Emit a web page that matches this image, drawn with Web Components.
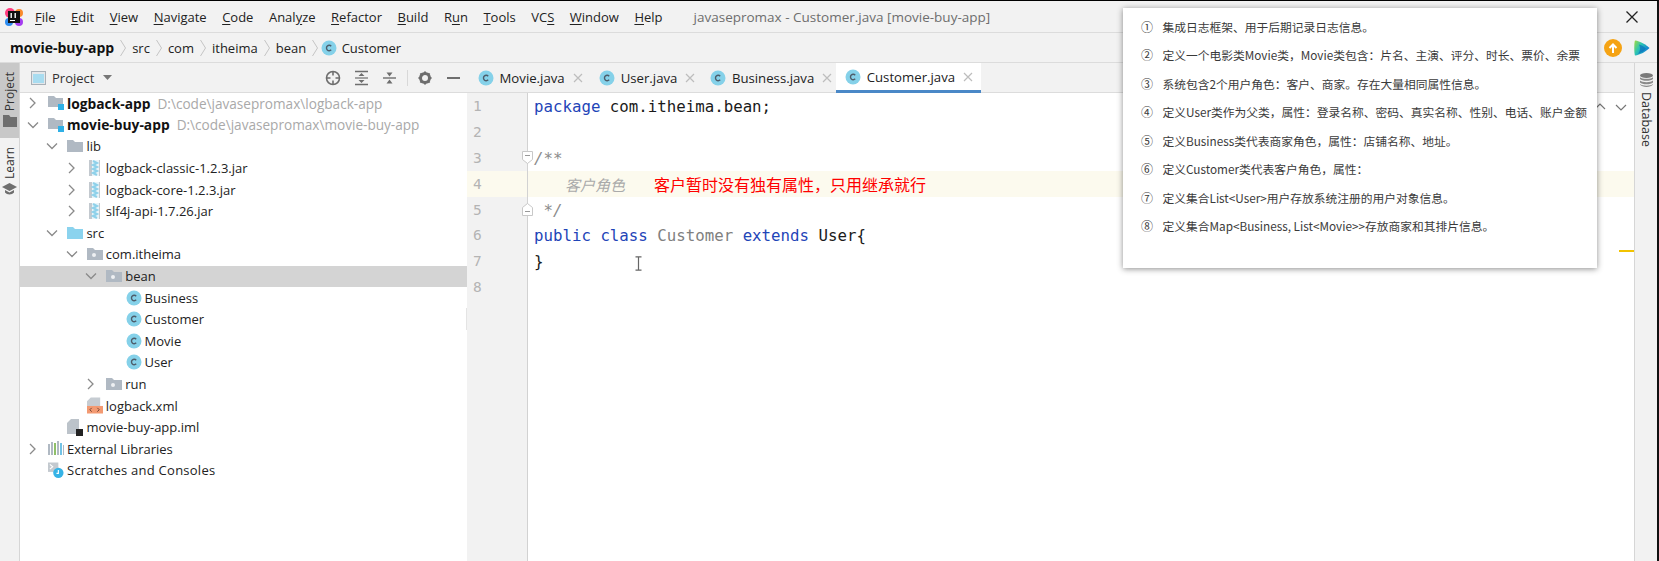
<!DOCTYPE html>
<html lang="zh">
<head>
<meta charset="utf-8">
<title>javasepromax - Customer.java [movie-buy-app]</title>
<style>
    html, body { margin: 0; padding: 0; background: #fff; overflow: hidden; }
    body { font-family: "Open Sans", "Noto Sans CJK SC", sans-serif; color: #222; }
    u { text-underline-offset: 2px; }
</style>
</head>
<body>

<ide-app>
    <ide-menubar>
        <menu-item><u>F</u>ile</menu-item>
        <menu-item><u>E</u>dit</menu-item>
        <menu-item><u>V</u>iew</menu-item>
        <menu-item><u>N</u>avigate</menu-item>
        <menu-item><u>C</u>ode</menu-item>
        <menu-item>Anal<u>y</u>ze</menu-item>
        <menu-item><u>R</u>efactor</menu-item>
        <menu-item><u>B</u>uild</menu-item>
        <menu-item>R<u>u</u>n</menu-item>
        <menu-item><u>T</u>ools</menu-item>
        <menu-item>VC<u>S</u></menu-item>
        <menu-item><u>W</u>indow</menu-item>
        <menu-item><u>H</u>elp</menu-item>
        <span slot="title">javasepromax - Customer.java [movie-buy-app]</span>
    </ide-menubar>

    <ide-breadcrumb>
        <crumb-item bold>movie-buy-app</crumb-item>
        <crumb-item>src</crumb-item>
        <crumb-item>com</crumb-item>
        <crumb-item>itheima</crumb-item>
        <crumb-item>bean</crumb-item>
        <crumb-item icon="class" last>Customer</crumb-item>
    </ide-breadcrumb>

    <ide-main>
        <tool-strip>
            <strip-button active icon="folder">Project</strip-button>
            <strip-button icon="cap">Learn</strip-button>
        </tool-strip>

        <project-panel>
            <tree-row chevron="closed" icon="module" depth="0"><b>logback-app</b><small>D:\code\javasepromax\logback-app</small></tree-row>
            <tree-row chevron="open" icon="module" depth="0"><b>movie-buy-app</b><small>D:\code\javasepromax\movie-buy-app</small></tree-row>
            <tree-row chevron="open" icon="folder" depth="1">lib</tree-row>
            <tree-row chevron="closed" icon="jar" depth="2">logback-classic-1.2.3.jar</tree-row>
            <tree-row chevron="closed" icon="jar" depth="2">logback-core-1.2.3.jar</tree-row>
            <tree-row chevron="closed" icon="jar" depth="2">slf4j-api-1.7.26.jar</tree-row>
            <tree-row chevron="open" icon="src" depth="1">src</tree-row>
            <tree-row chevron="open" icon="package" depth="2">com.itheima</tree-row>
            <tree-row chevron="open" icon="package" depth="3" selected>bean</tree-row>
            <tree-row icon="class" depth="4">Business</tree-row>
            <tree-row icon="class" depth="4">Customer</tree-row>
            <tree-row icon="class" depth="4">Movie</tree-row>
            <tree-row icon="class" depth="4">User</tree-row>
            <tree-row chevron="closed" icon="package" depth="3">run</tree-row>
            <tree-row icon="xml" depth="2">logback.xml</tree-row>
            <tree-row icon="iml" depth="1">movie-buy-app.iml</tree-row>
            <tree-row chevron="closed" icon="libs" depth="0">External Libraries</tree-row>
            <tree-row icon="scratch" depth="0" wide>Scratches and Consoles</tree-row>
        </project-panel>

        <editor-pane>
            <editor-tab slot="tabs" pad="10.5" end="5.5">Movie.java</editor-tab>
            <editor-tab slot="tabs" pad="10.5" end="4.5">User.java</editor-tab>
            <editor-tab slot="tabs" pad="10" end="3.5">Business.java</editor-tab>
            <editor-tab slot="tabs" pad="9" end="8" active>Customer.java</editor-tab>

            <code-line n="1"><i class="kw">package</i> com.itheima.bean;</code-line>
            <code-line n="2"></code-line>
            <code-line n="3" fold="start"><i class="doc">/**</i></code-line>
            <code-line n="4" active><span class="gray">客户角色</span><span class="red">客户暂时没有独有属性，只用继承就行</span></code-line>
            <code-line n="5" fold="end"><i class="doc"> */</i></code-line>
            <code-line n="6"><i class="kw">public class</i> <span class="cls">Customer</span> <i class="kw">extends</i> User{</code-line>
            <code-line n="7">}</code-line>
            <code-line n="8"></code-line>
        </editor-pane>

        <right-strip>Database</right-strip>
    </ide-main>

    <note-popup>
        <note-item n="①">集成日志框架、用于后期记录日志信息。</note-item>
        <note-item n="②">定义一个电影类Movie类，Movie类包含：片名、主演、评分、时长、票价、余票</note-item>
        <note-item n="③">系统包含2个用户角色：客户、商家。存在大量相同属性信息。</note-item>
        <note-item n="④">定义User类作为父类，属性：登录名称、密码、真实名称、性别、电话、账户金额</note-item>
        <note-item n="⑤">定义Business类代表商家角色，属性：店铺名称、地址。</note-item>
        <note-item n="⑥">定义Customer类代表客户角色，属性：</note-item>
        <note-item n="⑦">定义集合List&lt;User&gt;用户存放系统注册的用户对象信息。</note-item>
        <note-item n="⑧">定义集合Map&lt;Business, List&lt;Movie&gt;&gt;存放商家和其排片信息。</note-item>
    </note-popup>
</ide-app>

<script>
const UI_FONT = '"Open Sans", "Noto Sans CJK SC", sans-serif';

// all tree, tab and strip icons live here
const ICONS = {
    folder: `<svg width="16" height="14" viewBox="0 0 16 14"><path d="M0 1h6l2 2h8v10H0z" fill="#b0b9c3"/></svg>`,
    src: `<svg width="16" height="14" viewBox="0 0 16 14"><path d="M0 1h6l2 2h8v10H0z" fill="#8bd3ee"/></svg>`,
    package: `<svg width="16" height="14" viewBox="0 0 16 14"><path d="M0 1h6l2 2h8v10H0z" fill="#b0b9c3"/><circle cx="7" cy="8" r="2" fill="#eef0f2"/></svg>`,
    module: `<svg width="16" height="16" viewBox="0 0 16 16"><path d="M0 1h6l2 2h7v9H0z" fill="#b0b9c3"/><rect x="10" y="9" width="6" height="6" fill="#2fb0e6"/></svg>`,
    jar: `<svg width="12" height="16" viewBox="0 0 12 16"><rect x="0" y="0" width="11" height="16" fill="#c3c9cf"/><rect x="3" y="0" width="7" height="16" fill="#e8f4f9"/><path d="M4 1l4 2-4 2 4 2-4 2 4 2-4 2 4 2" fill="none" stroke="#8ed1ea" stroke-width="2"/></svg>`,
    class: `<svg width="16" height="16" viewBox="0 0 16 16"><circle cx="8" cy="8" r="7.5" fill="#85d1e9"/><path d="M10.2 6.2a2.7 2.7 0 1 0 0 3.6" fill="none" stroke="#4d5d6b" stroke-width="1.4"/></svg>`,
    xml: `<svg width="17" height="17" viewBox="0 0 17 17"><path d="M4 0h10v10H0V4z" fill="#c6ccd2"/><rect x="0" y="9" width="17" height="8" fill="#f39a72"/><path d="M5 11l-2 2 2 2M11 11l2 2-2 2" fill="none" stroke="#6b4030" stroke-width="1"/></svg>`,
    iml: `<svg width="16" height="17" viewBox="0 0 16 17"><path d="M4 0h8v15H0V4z" fill="#bcc3ca"/><rect x="9" y="10" width="7" height="7" fill="#222"/></svg>`,
    libs: `<svg width="16" height="15" viewBox="0 0 16 15"><rect x="0" y="3" width="2" height="11" fill="#b0b9c3"/><rect x="3" y="1" width="2" height="13" fill="#b0b9c3"/><rect x="6" y="2" width="2" height="12" fill="#8fc069"/><rect x="9" y="0" width="2" height="14" fill="#b0b9c3"/><rect x="12" y="2" width="2" height="12" fill="#72c3e6"/><rect x="15" y="4" width="1" height="10" fill="#b0b9c3"/></svg>`,
    scratch: `<svg width="17" height="17" viewBox="0 0 17 17"><rect x="0" y="0" width="11" height="10" fill="#c3c9cf"/><path d="M2 2l3 2.5L2 7" fill="none" stroke="#fff" stroke-width="1.2"/><circle cx="11" cy="11" r="5.5" fill="#36b3e6"/><path d="M11 8v3.5H9" fill="none" stroke="#fff" stroke-width="1.2"/></svg>`,
    cap: `<svg width="15" height="12" viewBox="0 0 15 12"><path d="M7.5 0L15 4 7.5 8 0 4z" fill="#6e6e6e"/><path d="M3 7v2.5C5 12 10 12 12 9.5V7L7.5 9.5z" fill="#6e6e6e"/></svg>`,
    stripFolder: `<svg width="14" height="12" viewBox="0 0 14 12"><path d="M0 0h6l1.5 2H14v10H0z" fill="#6e6e6e"/></svg>`
};

class IdeApp extends HTMLElement {
    constructor() {
        super();
        this.attachShadow({ mode: 'open' });
        this.shadowRoot.innerHTML = `
            <style>
                :host {
                    display: flex;
                    flex-direction: column;
                    position: relative;
                    box-sizing: border-box;
                    width: 1659px;
                    height: 561px;
                    overflow: hidden;
                    border-top: 1px solid #000;
                    border-right: 2px solid #111;
                    background: #f2f2f2;
                    font-family: ${UI_FONT};
                }
                .marker {
                    position: absolute;
                    right: -2px;
                    top: 209px;
                    width: 2px;
                    height: 42px;
                    background: #1e90f0;
                }
            </style>
            <slot></slot>
            <div class="marker"></div>
        `;
    }
}

class IdeMenubar extends HTMLElement {
    constructor() {
        super();
        this.attachShadow({ mode: 'open' });
        this.shadowRoot.innerHTML = `
            <style>
                :host {
                    display: flex;
                    align-items: center;
                    box-sizing: border-box;
                    height: 32px;
                    flex: none;
                    padding-left: 5px;
                    background: #f2f2f2;
                    border-bottom: 1px solid #dcdcdc;
                }
                .logo { flex: none; width: 18px; height: 18px; margin-right: 12px; }
                .items { display: flex; gap: 15.5px; font-size: 13px; color: #222; }
                .title { margin-left: 31px; font-size: 13.5px; color: #6e6e6e; white-space: nowrap; }
                .close { margin-left: auto; margin-right: 19px; width: 12px; height: 12px; }
            </style>
            <svg class="logo" viewBox="0 0 18 18">
                <circle cx="5" cy="5" r="5" fill="#ff3d7f"/>
                <circle cx="14" cy="5" r="4" fill="#f98a2c"/>
                <circle cx="4" cy="14" r="4" fill="#2d8cf0"/>
                <circle cx="14" cy="14" r="4" fill="#a53cf0"/>
                <rect x="3" y="3" width="12" height="12" fill="#111"/>
                <rect x="5" y="12" width="5" height="1" fill="#fff"/>
                <rect x="5.5" y="5" width="1.4" height="5" fill="#fff"/>
                <rect x="9.5" y="5" width="1.4" height="5" fill="#fff"/>
            </svg>
            <div class="items"><slot></slot></div>
            <div class="title"><slot name="title"></slot></div>
            <svg class="close" viewBox="0 0 12 12"><path d="M.5.5l11 11M11.5.5l-11 11" stroke="#222" stroke-width="1.3"/></svg>
        `;
    }
}

class MenuItem extends HTMLElement {
    constructor() {
        super();
        this.attachShadow({ mode: 'open' });
        this.shadowRoot.innerHTML = `<style>:host { display: block; white-space: nowrap; }</style><slot></slot>`;
    }
}

class IdeBreadcrumb extends HTMLElement {
    constructor() {
        super();
        this.attachShadow({ mode: 'open' });
        this.shadowRoot.innerHTML = `
            <style>
                :host {
                    display: flex;
                    align-items: center;
                    box-sizing: border-box;
                    height: 30px;
                    flex: none;
                    padding-left: 10px;
                    background: #f2f2f2;
                    border-bottom: 1px solid #dcdcdc;
                    font-size: 13px;
                }
                .right { margin-left: auto; margin-right: 7px; display: flex; align-items: center; gap: 11px; }
            </style>
            <slot></slot>
            <div class="right">
                <svg width="18" height="18" viewBox="0 0 18 18">
                    <circle cx="9" cy="9" r="9" fill="#f5a314"/>
                    <path d="M9 14V6M5.5 9L9 5.5 12.5 9" fill="none" stroke="#fff" stroke-width="2"/>
                </svg>
                <svg width="17" height="18" viewBox="0 0 17 18">
                    <defs>
                        <linearGradient id="play" x1="0" y1="0" x2="1" y2="0.6">
                            <stop offset="0" stop-color="#a5dc3c"/>
                            <stop offset="0.45" stop-color="#2cc4b4"/>
                            <stop offset="1" stop-color="#0d78d8"/>
                        </linearGradient>
                    </defs>
                    <path d="M2 1.5C1 3 1 15 2 16.5C7 16 13 12.5 16.5 9C13 5.5 7 2 2 1.5z" fill="url(#play)"/>
                    <path d="M6 5.5C9 6.5 11.5 8 13 9.5C11 12 8.5 13.5 5 15C7.5 12 7.5 8.5 6 5.5z" fill="#0a6fbe" opacity="0.7"/>
                </svg>
            </div>
        `;
    }
}

class CrumbItem extends HTMLElement {
    constructor() {
        super();
        this.attachShadow({ mode: 'open' });
    }

    connectedCallback() {
        const icon = this.getAttribute('icon');
        const last = this.hasAttribute('last');
        this.shadowRoot.innerHTML = `
            <style>
                :host { display: flex; align-items: center; white-space: nowrap; color: #222; }
                :host([bold]) { font-weight: 700; color: #111; font-size: 14px; }
                :host([last]) { margin-left: -3.5px; }
                .icon { display: flex; margin-right: 5px; }
                .sep { margin: 0 6px 0 6px; }
            </style>
            ${icon ? `<span class="icon">${ICONS[icon]}</span>` : ''}
            <slot></slot>
            ${last ? '' : `<svg class="sep" width="6" height="18" viewBox="0 0 6 18"><path d="M.5 1l5 8-5 8" fill="none" stroke="#c4c4c4"/></svg>`}
        `;
    }
}

class IdeMain extends HTMLElement {
    constructor() {
        super();
        this.attachShadow({ mode: 'open' });
        this.shadowRoot.innerHTML = `
            <style>
                :host { display: flex; flex: 1; min-height: 0; }
            </style>
            <slot></slot>
        `;
    }
}

class ToolStrip extends HTMLElement {
    constructor() {
        super();
        this.attachShadow({ mode: 'open' });
        this.shadowRoot.innerHTML = `
            <style>
                :host {
                    display: flex;
                    flex-direction: column;
                    box-sizing: border-box;
                    width: 20px;
                    flex: none;
                    background: #f2f2f2;
                    border-right: 1px solid #d6d6d6;
                }
            </style>
            <slot></slot>
        `;
    }
}

class StripButton extends HTMLElement {
    constructor() {
        super();
        this.attachShadow({ mode: 'open' });
    }

    connectedCallback() {
        const icon = this.getAttribute('icon') === 'cap' ? ICONS.cap : ICONS.stripFolder;
        this.shadowRoot.innerHTML = `
            <style>
                :host {
                    display: flex;
                    flex-direction: column;
                    align-items: center;
                    height: 82px;
                    padding-top: 9px;
                    box-sizing: border-box;
                    gap: 4px;
                    font-size: 12px;
                    color: #333;
                }
                :host([active]) { height: 75px; background: #c8c8c8; }
                .label { writing-mode: vertical-rl; transform: rotate(180deg); }
            </style>
            <span class="label"><slot></slot></span>
            ${icon}
        `;
    }
}

class ProjectPanel extends HTMLElement {
    constructor() {
        super();
        this.attachShadow({ mode: 'open' });
        this.shadowRoot.innerHTML = `
            <style>
                :host {
                    display: flex;
                    flex-direction: column;
                    position: relative;
                    box-sizing: border-box;
                    width: 447px;
                    flex: none;
                    background: #fff;
                }
                header {
                    display: flex;
                    align-items: center;
                    box-sizing: border-box;
                    height: 30px;
                    flex: none;
                    padding-left: 11px;
                    background: #f2f2f2;
                    border-bottom: 1px solid #dcdcdc;
                    font-size: 13px;
                    color: #333;
                }
                .title-icon { margin-right: 6px; }
                .caret { margin-left: 9px; }
                .tools { margin-left: auto; margin-right: 7.5px; }
                .thumb {
                    position: absolute;
                    right: 0;
                    top: 245px;
                    width: 1px;
                    height: 22px;
                    background: #e4e4e4;
                }
            </style>
            <header>
                <svg class="title-icon" width="15" height="14" viewBox="0 0 15 14">
                    <rect x=".5" y=".5" width="14" height="13" fill="#e4e7ea" stroke="#a9b0b7"/>
                    <rect x="2" y="3" width="11" height="9" fill="#a8dcf0"/>
                </svg>
                <span>Project</span>
                <svg class="caret" width="9" height="5" viewBox="0 0 9 5"><path d="M0 0h9L4.5 5z" fill="#777"/></svg>
                <svg class="tools" width="140" height="18" viewBox="0 0 140 18">
                    <g fill="none" stroke="#6e6e6e" stroke-width="1.6">
                        <circle cx="13" cy="9" r="6.5"/>
                        <path d="M13 2.5v4M13 11.5v4M6.5 9h4M15.5 9h4"/>
                        <path d="M35 2.5h13M35 15.5h13"/>
                    </g>
                    <path d="M35 9h13" stroke="#6e6e6e" stroke-width="1.2"/>
                    <path d="M41.5 4l3 3h-6zM41.5 14l3-3h-6z" fill="#6e6e6e"/>
                    <path d="M63 9h13" stroke="#6e6e6e" stroke-width="1.4"/>
                    <path d="M69.5 7.5l3-4h-6zM69.5 10.5l3 4h-6z" fill="#6e6e6e"/>
                    <path d="M87.5 1v16" stroke="#d8d8d8"/>
                    <circle cx="105" cy="9" r="4.5" fill="none" stroke="#6e6e6e" stroke-width="3"/>
                    <path d="M105 2.5v13M98.5 9h13M100.4 4.4l9.2 9.2M109.6 4.4l-9.2 9.2" stroke="#6e6e6e" stroke-width="2" stroke-dasharray="2 9"/>
                    <path d="M127 9h13" stroke="#6e6e6e" stroke-width="2"/>
                </svg>
            </header>
            <slot></slot>
            <div class="thumb"></div>
        `;
    }
}

class TreeRow extends HTMLElement {
    constructor() {
        super();
        this.attachShadow({ mode: 'open' });
    }

    connectedCallback() {
        const depth = Number(this.getAttribute('depth') || 0);
        const chevron = this.getAttribute('chevron');
        let chevronSvg = '';
        if (chevron === 'closed') {
            chevronSvg = `<path d="M4 2l5 5-5 5" fill="none" stroke="#8a8a8a" stroke-width="1.3"/>`;
        } else if (chevron === 'open') {
            chevronSvg = `<path d="M2 4.5l5 5 5-5" fill="none" stroke="#8a8a8a" stroke-width="1.3"/>`;
        }
        this.shadowRoot.innerHTML = `
            <style>
                :host {
                    display: flex;
                    align-items: center;
                    box-sizing: border-box;
                    height: 21.6px;
                    flex: none;
                    padding-left: ${6 + depth * 19.4}px;
                    padding-bottom: 1px;
                    font-size: 13px;
                    color: #222;
                    white-space: nowrap;
                }
                :host([selected]) { background: #d4d4d4; }
                :host([wide]) { letter-spacing: 0.25px; }
                .chevron { width: 14px; height: 14px; flex: none; margin-right: 8px; }
                .icon { width: 16px; display: flex; justify-content: center; flex: none; margin-right: 3px; }
                ::slotted(small) { font-size: 13.6px; color: #a9a9a9; margin-left: 7px; }
                ::slotted(b) { color: #111; font-size: 13.8px; }
            </style>
            <svg class="chevron" viewBox="0 0 14 14">${chevronSvg}</svg>
            <span class="icon">${ICONS[this.getAttribute('icon')]}</span>
            <slot></slot>
        `;
    }
}

class EditorPane extends HTMLElement {
    constructor() {
        super();
        this.attachShadow({ mode: 'open' });
        this.shadowRoot.innerHTML = `
            <style>
                :host {
                    display: flex;
                    flex-direction: column;
                    position: relative;
                    flex: 1;
                    min-width: 0;
                }
                nav {
                    display: flex;
                    box-sizing: border-box;
                    height: 30px;
                    flex: none;
                    background: #f2f2f2;
                    border-bottom: 1px solid #dcdcdc;
                }
                .code {
                    flex: 1;
                    background: linear-gradient(90deg, #f2f2f2 60px, #d2d2d2 60px, #d2d2d2 61px, #fff 61px);
                }
                .arrows { position: absolute; left: 1125px; top: 38px; }
                .warn {
                    position: absolute;
                    right: 0;
                    top: 187px;
                    width: 15px;
                    height: 2px;
                    background: #f2c300;
                }
                .caret { position: absolute; left: 168px; top: 193px; }
            </style>
            <nav><slot name="tabs"></slot></nav>
            <div class="code"><slot></slot></div>
            <svg class="arrows" width="40" height="12" viewBox="0 0 40 12">
                <path d="M3 8l5-5 5 5M24 4l5 5 5-5" fill="none" stroke="#777" stroke-width="1.2"/>
            </svg>
            <div class="warn"></div>
            <svg class="caret" width="7" height="15" viewBox="0 0 7 15">
                <path d="M.5.8h6M.5 14.2h6M3.5.8v13.4" fill="none" stroke="#666" stroke-width="1.2"/>
            </svg>
        `;
    }
}

class EditorTab extends HTMLElement {
    constructor() {
        super();
        this.attachShadow({ mode: 'open' });
    }

    connectedCallback() {
        this.shadowRoot.innerHTML = `
            <style>
                :host {
                    display: flex;
                    align-items: center;
                    box-sizing: border-box;
                    height: 30px;
                    padding-left: ${this.getAttribute('pad')}px;
                    padding-right: ${this.getAttribute('end')}px;
                    font-size: 13.2px;
                    color: #222;
                    white-space: nowrap;
                }
                :host([active]) { background: #fff; border-bottom: 3px solid #4a88c7; }
                .icon { display: flex; margin-right: 6px; }
                .x { margin-left: 8px; }
            </style>
            <span class="icon">${ICONS.class}</span>
            <slot></slot>
            <svg class="x" width="10" height="10" viewBox="0 0 10 10"><path d="M1 1l8 8M9 1l-8 8" stroke="#bdbdbd" stroke-width="1.2"/></svg>
        `;
    }
}

class CodeLine extends HTMLElement {
    constructor() {
        super();
        this.attachShadow({ mode: 'open' });
    }

    connectedCallback() {
        const fold = this.getAttribute('fold');
        let foldMark = '';
        if (fold === 'start') {
            foldMark = `<svg class="fold" width="11" height="13" viewBox="0 0 11 13"><path d="M.5.5h10v8l-5 4-5-4z" fill="#fff" stroke="#c8c8c8"/><path d="M3 4.5h5" stroke="#999"/></svg>`;
        } else if (fold === 'end') {
            foldMark = `<svg class="fold" width="11" height="13" viewBox="0 0 11 13"><path d="M.5 12.5h10v-8l-5-4-5 4z" fill="#fff" stroke="#c8c8c8"/><path d="M3 8.5h5" stroke="#999"/></svg>`;
        }
        this.shadowRoot.innerHTML = `
            <style>
                :host {
                    display: flex;
                    position: relative;
                    height: 25.9px;
                    line-height: 27.5px;
                    font-family: "DejaVu Sans Mono", "Noto Sans CJK SC", monospace;
                    font-size: 15.75px;
                    color: #1a1a1a;
                    white-space: pre;
                }
                :host([active]) { background: #fcfaee; }
                .num { box-sizing: border-box; width: 60px; padding-left: 6px; color: #b4b4b4; font-size: 14.5px; flex: none; }
                .sep { width: 1px; background: #d2d2d2; flex: none; margin-right: 6px; }
                .text { display: block; }
                .fold { position: absolute; left: 55px; top: 6px; }
                ::slotted(i) { font-style: normal; }
                ::slotted(i.kw) { color: #1f45b8; }
                ::slotted(i.doc) { color: #8c8c8c; font-style: italic; }
                ::slotted(.cls) { color: #808080; }
                ::slotted(.gray) { margin-left: 31px; color: #aaa; font-style: italic; font-size: 15px; font-family: "Noto Sans CJK SC", sans-serif; }
                ::slotted(.red) { margin-left: 29px; color: #f00; font-size: 16px; font-family: "Noto Sans CJK SC", sans-serif; }
            </style>
            <span class="num">${this.getAttribute('n')}</span>
            <span class="sep"></span>
            <span class="text"><slot></slot></span>
            ${foldMark}
        `;
    }
}

class RightStrip extends HTMLElement {
    constructor() {
        super();
        this.attachShadow({ mode: 'open' });
        this.shadowRoot.innerHTML = `
            <style>
                :host {
                    display: flex;
                    flex-direction: column;
                    align-items: center;
                    box-sizing: border-box;
                    width: 23px;
                    flex: none;
                    padding-top: 10px;
                    gap: 5px;
                    background: #f2f2f2;
                    border-left: 1px solid #d6d6d6;
                    font-size: 12.5px;
                    color: #333;
                }
                .label { writing-mode: vertical-rl; }
            </style>
            <svg width="13" height="14" viewBox="0 0 13 14">
                <ellipse cx="6.5" cy="2.5" rx="6.5" ry="2.5" fill="#7a7a7a"/>
                <path d="M0 4.2c2 2.2 11 2.2 13 0V6c-2 2.4-11 2.4-13 0zM0 7.6c2 2.2 11 2.2 13 0v1.8c-2 2.4-11 2.4-13 0zM0 11c2 2.2 11 2.2 13 0v.5c-2 3.2-11 3.2-13 0z" fill="#8a8a8a"/>
            </svg>
            <span class="label"><slot></slot></span>
        `;
    }
}

class NotePopup extends HTMLElement {
    constructor() {
        super();
        this.attachShadow({ mode: 'open' });
        this.shadowRoot.innerHTML = `
            <style>
                :host {
                    display: flex;
                    flex-direction: column;
                    position: absolute;
                    left: 1123px;
                    top: 7px;
                    box-sizing: border-box;
                    width: 474px;
                    height: 260px;
                    padding-top: 4px;
                    background: #fff;
                    box-shadow: 0 1px 6px rgba(0, 0, 0, 0.45);
                }
            </style>
            <slot></slot>
        `;
    }
}

class NoteItem extends HTMLElement {
    constructor() {
        super();
        this.attachShadow({ mode: 'open' });
    }

    connectedCallback() {
        this.shadowRoot.innerHTML = `
            <style>
                :host {
                    display: flex;
                    align-items: center;
                    height: 28.5px;
                    flex: none;
                    padding-left: 18px;
                    font-family: "Noto Sans CJK SC", sans-serif;
                    font-size: 11.75px;
                    color: #3a3a3a;
                    white-space: nowrap;
                }
                .n { width: 21.5px; flex: none; font-size: 12px; }
            </style>
            <span class="n">${this.getAttribute('n')}</span>
            <slot></slot>
        `;
    }
}

customElements.define('ide-app', IdeApp);
customElements.define('ide-menubar', IdeMenubar);
customElements.define('menu-item', MenuItem);
customElements.define('ide-breadcrumb', IdeBreadcrumb);
customElements.define('crumb-item', CrumbItem);
customElements.define('ide-main', IdeMain);
customElements.define('tool-strip', ToolStrip);
customElements.define('strip-button', StripButton);
customElements.define('project-panel', ProjectPanel);
customElements.define('tree-row', TreeRow);
customElements.define('editor-pane', EditorPane);
customElements.define('editor-tab', EditorTab);
customElements.define('code-line', CodeLine);
customElements.define('right-strip', RightStrip);
customElements.define('note-popup', NotePopup);
customElements.define('note-item', NoteItem);
</script>
</body>
</html>
